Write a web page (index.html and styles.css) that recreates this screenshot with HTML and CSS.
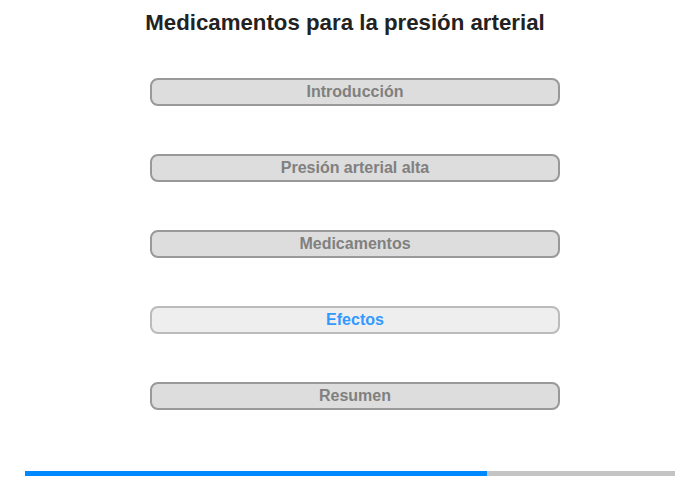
FILE: index.html
```html
<!DOCTYPE html>
<html lang="es">
<head>
    <meta charset="UTF-8">
    <meta name="viewport" content="width=device-width, initial-scale=1.0">
    <title>Medicamentos para la presión arterial</title>
    <link rel="stylesheet" href="styles.css">
</head>
<body>
    <header>
        <h1>Medicamentos para la presión arterial</h1>
    </header>
    <main>
        <ul class="topics">
            <li class="topic">Introducción</li>
            <li class="topic">Presión arterial alta</li>
            <li class="topic">Medicamentos</li>
            <li class="topic current">Efectos</li>
            <li class="topic">Resumen</li>
        </ul>
    </main>
    <footer>
        <div class="progress">
            <div class="progress-fill" style="width: 71%"></div>
        </div>
    </footer>
</body>
</html>
```

FILE: styles.css
```css
/* Basic CSS Styles */
body {
    font-family: Arial, "Liberation Sans", sans-serif;
    margin: 0;
    padding: 0;
    background-color: #fff;
    width: 700px;
    height: 480px;
    display: flex;
    flex-direction: column;
}
header {
    padding: 10px 0 0 0;
    text-align: center;
}
h1 {
    margin: 0;
    font-size: 22.25px;
    font-weight: bold;
    color: #222;
    line-height: 26px;
    padding-right: 10px;
}
main {
    flex: 1;
}
.topics {
    list-style: none;
    margin: 42px 0 0 150px;
    padding: 0;
    width: 410px;
    display: flex;
    flex-direction: column;
    gap: 48px;
}
.topic {
    box-sizing: border-box;
    height: 28px;
    border: 2px solid #999;
    border-radius: 8px;
    background-color: #ddd;
    color: #808080;
    font-size: 16px;
    font-weight: bold;
    text-align: center;
    line-height: 24px;
}
.topic.current {
    background-color: #eee;
    border-color: #bbb;
    color: #3399ff;
}
footer {
    padding: 0 25px 4px 25px;
}
.progress {
    height: 5px;
    background-color: #c4c4c4;
}
.progress-fill {
    height: 100%;
    background-color: #0088ff;
}
```
